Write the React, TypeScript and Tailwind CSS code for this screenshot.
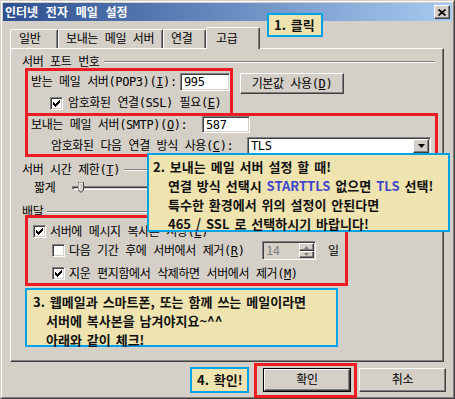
import React from "react";

// classic win32 bevels
const sunken =
  "border border-t-[#808080] border-l-[#808080] border-r-white border-b-white shadow-[inset_1px_1px_0_#404040,inset_-1px_-1px_0_#d4d0c8]";
const raised =
  "border border-t-white border-l-white border-r-[#404040] border-b-[#404040] shadow-[inset_-1px_-1px_0_#808080]";

const checkTops = [2, 3, 4, 3, 2, 1, 0];

function Check({ checked }: { checked?: boolean }) {
  return (
    <span className={`w-[13px] h-[13px] shrink-0 bg-white flex items-center justify-center ${sunken}`}>
      {checked && (
        <svg width="7" height="7" viewBox="0 0 7 7" shapeRendering="crispEdges">
          {checkTops.map((t, i) => (
            <rect key={i} x={i} y={t} width="1" height="3" fill="#000" />
          ))}
        </svg>
      )}
    </span>
  );
}

function GroupHead({ children }: { children: React.ReactNode }) {
  return (
    <div className="h-[14px] flex items-center shrink-0">
      <span className="whitespace-nowrap">{children}</span>
      <span className="flex-1 ml-[4px] h-[2px] border-t border-t-[#808080] border-b border-b-white" />
    </div>
  );
}

function Note({ className, children }: { className: string; children: React.ReactNode }) {
  return (
    <div
      className={`absolute bg-[#efe4b0] border-2 border-[#00a2e8] font-['Noto_Sans_CJK_KR',sans-serif] font-bold text-[13px] leading-[19px] tracking-normal text-[#111] [word-spacing:2px] whitespace-nowrap ${className}`}
    >
      {children}
    </div>
  );
}

export default function App() {
  return (
    <div className="relative w-[455px] h-[399px] overflow-hidden bg-[#d4d0c8] font-['DejaVu_Sans_Mono','Noto_Sans_CJK_KR',monospace] text-[12px] leading-[14px] tracking-[-0.4px] text-black">
      {/* window frame */}
      <div className="h-full border border-t-[#d4d0c8] border-l-[#d4d0c8] border-r-[#404040] border-b-[#404040]">
        <div className="h-full border border-t-white border-l-white border-r-[#808080] border-b-[#808080] p-px flex flex-col">
          {/* title bar */}
          <div className="h-[18px] shrink-0 flex items-center justify-between bg-linear-to-r from-[#2f4f8f] to-[#a8cbf2]">
            <span className="pl-[2px] font-['Noto_Sans_CJK_KR',sans-serif] font-bold text-[12px] tracking-normal text-white [word-spacing:5px]">
              인터넷 전자 메일 설정
            </span>
            <span className={`mr-[2px] w-[16px] h-[14px] bg-[#d4d0c8] flex items-center justify-center ${raised}`}>
              <svg width="8" height="7" viewBox="0 0 8 7">
                <path d="M0.5 0.5 L7.5 6.5 M7.5 0.5 L0.5 6.5" stroke="#000" strokeWidth="1.7" />
              </svg>
            </span>
          </div>

          {/* tabs */}
          <div className="mt-[6px] h-[21px] pl-[7px] flex items-end shrink-0">
            <div className="h-[19px] w-[48px] pl-[8px] flex items-center border-t border-l border-t-white border-l-white border-r border-r-[#404040] shadow-[inset_-1px_0_0_#808080] rounded-t-[2px]">
              일반
            </div>
            <div className="h-[19px] w-[105px] pl-[7px] flex items-center border-t border-l border-t-white border-l-white border-r border-r-[#404040] shadow-[inset_-1px_0_0_#808080] rounded-t-[2px] whitespace-nowrap">
              보내는 메일 서버
            </div>
            <div className="h-[19px] w-[43px] pl-[7px] flex items-center border-t border-l border-t-white border-l-white border-r border-r-[#404040] shadow-[inset_-1px_0_0_#808080] rounded-t-[2px]">
              연결
            </div>
            <div className="relative z-10 -mb-px h-[22px] w-[54px] pl-[9px] flex items-center bg-[#d4d0c8] border-t border-l border-t-white border-l-white border-r border-r-[#404040] shadow-[inset_-1px_0_0_#808080] rounded-t-[2px]">
              고급
            </div>
          </div>

          {/* tab panel */}
          <div className="ml-[7px] w-[434px] h-[314px] shrink-0 border border-t-white border-l-white border-r-[#404040] border-b-[#404040] shadow-[inset_-1px_-1px_0_#808080] pt-[6px] pl-[11px] pr-[8px] flex flex-col">
            <GroupHead>서버 포트 번호</GroupHead>

            <div className="mt-[4px] h-[21px] pl-[9px] flex items-start shrink-0">
              <span className="w-[149px] h-[18px] flex items-center whitespace-nowrap">
                받는 메일 서버(POP3)(<u>I</u>):
              </span>
              <span className={`w-[50px] h-[18px] bg-white pl-[3px] flex items-center ${sunken}`}>995</span>
              <span className={`ml-[10px] w-[104px] h-[21px] flex items-center justify-center whitespace-nowrap ${raised}`}>
                기본값 사용(<u>D</u>)
              </span>
            </div>

            <div className="mt-[2px] h-[14px] pl-[28px] flex items-center gap-[5px] shrink-0">
              <Check checked />
              <span className="whitespace-nowrap">
                암호화된 연결(SSL) 필요(<u>E</u>)
              </span>
            </div>

            <div className="mt-[6px] h-[17px] pl-[9px] flex items-center shrink-0">
              <span className="w-[171px] whitespace-nowrap">
                보내는 메일 서버(SMTP)(<u>O</u>):
              </span>
              <span className={`w-[48px] h-[17px] bg-white pl-[3px] flex items-center ${sunken}`}>587</span>
            </div>

            <div className="mt-[4px] h-[18px] pl-[29px] flex items-center shrink-0">
              <span className="w-[196px] whitespace-nowrap">
                암호화된 다음 연결 방식 사용(<u>C</u>):
              </span>
              <span className={`w-[184px] h-[18px] bg-white pl-[3px] pr-px flex items-center justify-between ${sunken}`}>
                TLS
                <span className={`w-[16px] h-[14px] bg-[#d4d0c8] flex items-center justify-center ${raised}`}>
                  <svg width="7" height="4" viewBox="0 0 7 4">
                    <path d="M0 0 H7 L3.5 4 Z" fill="#000" />
                  </svg>
                </span>
              </span>
            </div>

            <div className="mt-[8px]">
              <GroupHead>
                서버 시간 제한(<u>T</u>)
              </GroupHead>
            </div>

            <div className="mt-[4px] h-[14px] pl-[12px] flex items-center shrink-0">
              <span className="w-[38px] whitespace-nowrap">짧게</span>
              <span className="relative w-[330px] h-[4px] border-t border-t-[#808080] border-l border-l-[#808080] border-b border-b-white border-r border-r-white shadow-[inset_1px_1px_0_#404040]">
                <svg className="absolute left-[5px] -top-[5px]" width="6" height="11" viewBox="0 0 6 11">
                  <path d="M0.5 0.5 H5.5 V8 L3 10.5 L0.5 8 Z" fill="#d4d0c8" stroke="#404040" />
                  <path d="M1 1 H5 M1 1 V8" stroke="#fff" />
                </svg>
              </span>
            </div>

            <div className="mt-[10px]">
              <GroupHead>배달</GroupHead>
            </div>

            <div className="mt-[5px] h-[15px] pl-[11px] flex items-center gap-[4px] shrink-0">
              <Check checked />
              <span className="whitespace-nowrap">
                서버에 메시지 복사본 저장(<u>L</u>)
              </span>
            </div>

            <div className="mt-[2px] h-[19px] pl-[30px] flex items-center shrink-0">
              <Check />
              <span className="ml-[4px] w-[193px] whitespace-nowrap">
                다음 기간 후에 서버에서 제거(<u>R</u>)
              </span>
              <span className={`w-[54px] h-[19px] bg-[#d4d0c8] pl-[3px] pr-px flex items-center justify-between text-[#808080] ${sunken}`}>
                14
                <span className="flex flex-col w-[15px] h-[15px]">
                  <span className={`h-[8px] bg-[#d4d0c8] flex items-center justify-center ${raised}`}>
                    <svg width="5" height="3" viewBox="0 0 5 3">
                      <path d="M0 3 H5 L2.5 0 Z" fill="#808080" />
                    </svg>
                  </span>
                  <span className={`h-[7px] bg-[#d4d0c8] flex items-center justify-center ${raised}`}>
                    <svg width="5" height="3" viewBox="0 0 5 3">
                      <path d="M0 0 H5 L2.5 3 Z" fill="#808080" />
                    </svg>
                  </span>
                </span>
              </span>
              <span className="ml-[12px]">일</span>
            </div>

            <div className="mt-[6px] h-[15px] pl-[30px] flex items-center gap-[4px] shrink-0">
              <Check checked />
              <span className="whitespace-nowrap">
                지운 편지함에서 삭제하면 서버에서 제거(<u>M</u>)
              </span>
            </div>
          </div>

          {/* dialog buttons */}
          <div className="mt-[6px] pr-[6px] flex justify-end gap-[8px] shrink-0">
            <span className="w-[88px] h-[24px] border border-black">
              <span className={`w-full h-full flex items-center justify-center ${raised}`}>확인</span>
            </span>
            <span className={`w-[87px] h-[24px] flex items-center justify-center ${raised}`}>취소</span>
          </div>
        </div>
      </div>

      {/* red highlight boxes */}
      <div className="absolute left-[209px] top-[28px] w-[51px] h-[20px] border-[3px] border-[#ed1c24]" />
      <div className="absolute left-[25px] top-[68px] w-[208px] h-[48px] border-[3px] border-[#ed1c24]" />
      <div className="absolute left-[25px] top-[113px] w-[413px] h-[44px] border-[3px] border-[#ed1c24]" />
      <div className="absolute left-[25px] top-[215px] w-[323px] h-[71px] border-[3px] border-[#ed1c24]" />
      <div className="absolute left-[254px] top-[363px] w-[103px] h-[35px] border-[3px] border-[#ed1c24]" />

      {/* annotations */}
      <Note className="left-[267px] top-[13px] w-[56px] h-[24px] pl-[5px] leading-[20px]">1. 클릭</Note>
      <Note className="left-[147px] top-[153px] w-[303px] h-[79px] pl-[4px] pt-[2px]">
        <div>2. 보내는 메일 서버 설정 할 때!</div>
        <div className="pl-[15px]">
          연결 방식 선택시 <span className="text-[#3f48cc]">STARTTLS</span> 없으면{" "}
          <span className="text-[#3f48cc]">TLS</span> 선택!
        </div>
        <div className="pl-[15px]">특수한 환경에서 위의 설정이 안된다면</div>
        <div className="pl-[15px]">465 / SSL 로 선택하시기 바랍니다!</div>
      </Note>
      <Note className="left-[25px] top-[288px] w-[313px] h-[59px] pl-[6px] leading-[17.5px] pt-[2px]">
        <div>3. 웹메일과 스마트폰, 또는 함께 쓰는 메일이라면</div>
        <div className="pl-[13px]">서버에 복사본을 남겨야지요~^^</div>
        <div className="pl-[13px]">아래와 같이 체크!</div>
      </Note>
      <Note className="left-[190px] top-[367px] w-[59px] h-[26px] pl-[5px] leading-[22px]">4. 확인!</Note>
    </div>
  );
}
